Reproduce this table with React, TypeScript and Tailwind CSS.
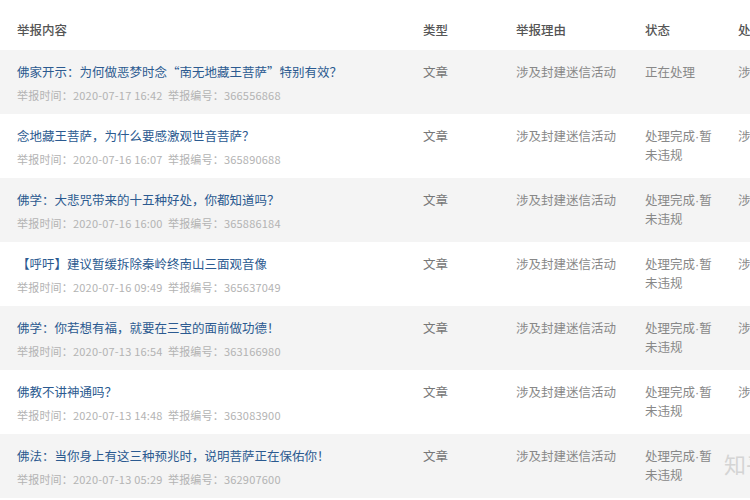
import React from "react";

const rows = [
  { title: "佛家开示：为何做恶梦时念“南无地藏王菩萨”特别有效？", time: "2020-07-17 16:42", id: "366556868", done: false },
  { title: "念地藏王菩萨，为什么要感激观世音菩萨？", time: "2020-07-16 16:07", id: "365890688", done: true },
  { title: "佛学：大悲咒带来的十五种好处，你都知道吗？", time: "2020-07-16 16:00", id: "365886184", done: true },
  { title: "【呼吁】建议暂缓拆除秦岭终南山三面观音像", time: "2020-07-16 09:49", id: "365637049", done: true },
  { title: "佛学：你若想有福，就要在三宝的面前做功德！", time: "2020-07-13 16:54", id: "363166980", done: true },
  { title: "佛教不讲神通吗？", time: "2020-07-13 14:48", id: "363083900", done: true },
  { title: "佛法：当你身上有这三种预兆时，说明菩萨正在保佑你！", time: "2020-07-13 05:29", id: "362907600", done: true },
];

const font = { fontFamily: '"Noto Sans CJK SC", "Noto Sans", sans-serif' };

export default function App() {
  return (
    <div className="w-[750px] h-[500px] overflow-hidden bg-white" style={font}>
      <div className="flex h-[50px] pt-[21px] text-[12.5px] leading-[18px] text-[#555] font-medium whitespace-nowrap">
        <div className="w-[423px] shrink-0 pl-[17px]">举报内容</div>
        <div className="w-[93px] shrink-0">类型</div>
        <div className="w-[129px] shrink-0">举报理由</div>
        <div className="w-[93px] shrink-0">状态</div>
        <div className="shrink-0">处理</div>
      </div>
      {rows.map((r, i) => (
        <div
          key={i}
          className={`flex h-[64px] pt-[13px] whitespace-nowrap ${i % 2 === 0 ? "bg-[#f4f4f4]" : "bg-white"}`}
        >
          <div className="w-[423px] shrink-0 pl-[17px]">
            <div className="text-[12.5px] leading-[18px] text-[#2b5a90]">{r.title}</div>
            <div className="mt-[6px] text-[11px] leading-[16px] tracking-[0.2px] text-[#b3b3b3]">
              举报时间：{r.time}&nbsp;&nbsp;举报编号：{r.id}
            </div>
          </div>
          <div className="w-[93px] shrink-0 text-[12.5px] leading-[18px] text-[#777]">文章</div>
          <div className="w-[129px] shrink-0 text-[12.5px] leading-[18px] text-[#888]">涉及封建迷信活动</div>
          <div className="w-[93px] shrink-0 text-[12.5px] leading-[18px] text-[#888]">
            {r.done ? (
              <>
                <div>
                  处理完成<span style={{ fontFamily: '"Liberation Sans", sans-serif' }}>·</span>暂
                </div>
                <div>未违规</div>
              </>
            ) : (
              <div>正在处理</div>
            )}
          </div>
          <div className="shrink-0 text-[12.5px] leading-[18px] text-[#888]">
            {i === 6 ? (
              <span className="block -ml-[14px] mt-[2px] text-[22px] leading-[28px] text-[#d4d4d4]">知乎</span>
            ) : (
              "涉及"
            )}
          </div>
        </div>
      ))}
    </div>
  );
}
